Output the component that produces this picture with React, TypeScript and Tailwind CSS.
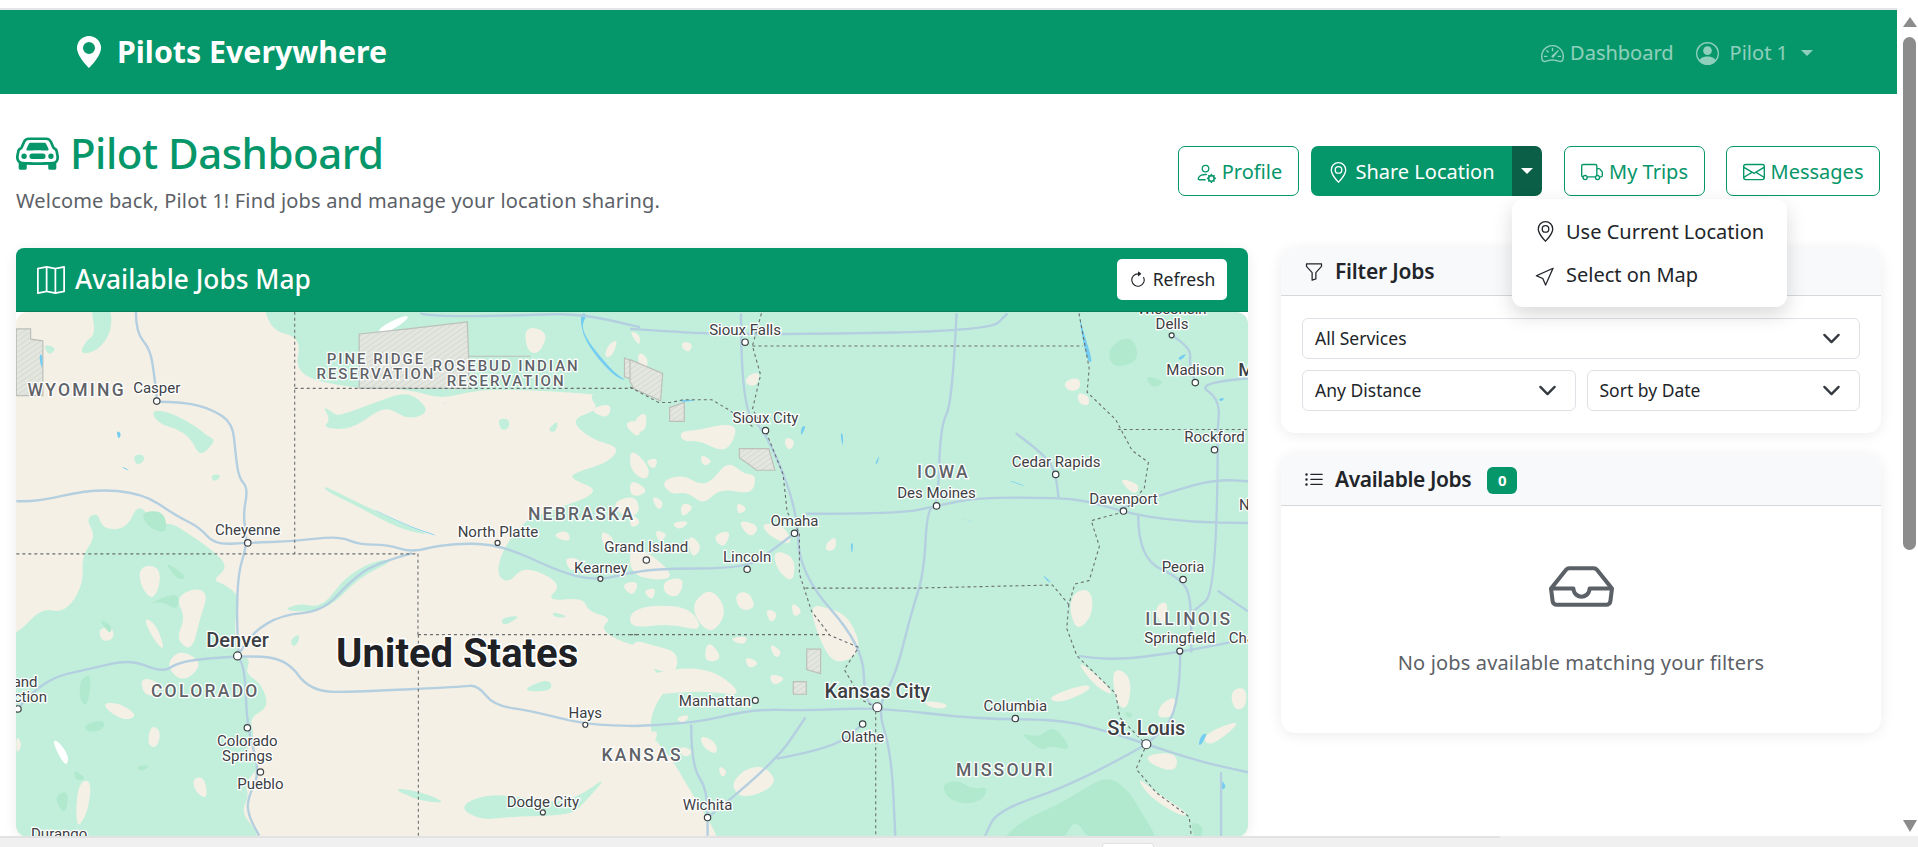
import {
  BsArrowClockwise,
  BsCarFront,
  BsCursor,
  BsEnvelope,
  BsFunnel,
  BsGeoAlt,
  BsGeoAltFill,
  BsInbox,
  BsListUl,
  BsMap,
  BsPersonCircle,
  BsPersonGear,
  BsSpeedometer2,
  BsTruck,
} from "react-icons/bs";

const sx = 1 / 2.45;
const sy = 1 / 2.92;
const lx = (x: number) => x * sx;
const rx = (x: number) => 630 + x * sx;
const my = (y: number) => 310 + y * sy;

type Label = [string, number, number, number?, number?];

// [text, x, baseline, size, weight]
const leftCities: Label[] = [
  ["Casper", 384, 243],
  ["Cheyenne", 607, 658],
  ["North Platte", 1220, 663],
  ["Kearney", 1472, 768],
  ["Denver", 582, 983, 20, 500],
  ["Colorado", 606, 1274],
  ["Springs", 606, 1318],
  ["Pueblo", 638, 1400],
  ["Hays", 1434, 1192],
  ["Dodge City", 1330, 1450],
  ["Durango", 145, 1545],
];

const rightCities: Label[] = [
  ["Sioux Falls", 282, 72],
  ["Wisconsin", 1328, 12],
  ["Dells", 1328, 55],
  ["Madison", 1385, 190],
  ["Sioux City", 332, 330],
  ["Rockford", 1432, 385],
  ["Cedar Rapids", 1044, 457],
  ["Des Moines", 751, 550],
  ["Davenport", 1209, 566],
  ["Omaha", 403, 630],
  ["Lincoln", 287, 735],
  ["Grand Island", 40, 708],
  ["Peoria", 1355, 765],
  ["Springfield", 1347, 973],
  ["Kansas City", 606, 1132, 20, 500],
  ["Manhattan", 208, 1155],
  ["Columbia", 944, 1171],
  ["Olathe", 570, 1262],
  ["St. Louis", 1265, 1240, 20, 500],
  ["Wichita", 190, 1460],
];

const leftStates: Label[] = [
  ["WYOMING", 188, 250],
  ["NEBRASKA", 1425, 612],
  ["COLORADO", 503, 1130],
  ["PINE RIDGE", 921, 158, 15],
  ["RESERVATION", 921, 202, 15],
  ["ROSEBUD INDIAN", 1240, 178, 15],
  ["RESERVATION", 1240, 222, 15],
];

const rightStates: Label[] = [
  ["KANSAS", 30, 1318],
  ["IOWA", 768, 492],
  ["ILLINOIS", 1369, 920],
  ["MISSOURI", 920, 1362],
];

const leftDots: [number, number, number?][] = [
  [384, 266], [607, 680], [1219, 680, 2.5], [1471, 785, 2.5], [582, 1010, 4], [606, 1220],
  [638, 1349], [1434, 1211, 2.5], [1330, 1467, 2.5], [44, 1165],
];

const rightDots: [number, number, number?][] = [
  [282, 94], [1327, 74, 2.5], [1385, 212], [332, 352], [1432, 408], [1043, 480], [751, 572],
  [1209, 587], [403, 652], [40, 730], [287, 757], [1355, 787], [1347, 996, 3], [606, 1160, 4.5],
  [307, 1140, 3], [570, 1209], [944, 1193], [1265, 1268, 4.5], [190, 1482],
];

// the big green body of the map, its west edge wanders down through Nebraska and Kansas
const landBody =
  "M1500 210 L1440 250 L1470 290 L1395 320 L1450 380 L1520 400 L1490 445 L1420 470 L1390 490 L1480 530 L1340 590 L1290 610 L1235 690 L1215 770 L1245 800 L1285 745 L1380 800 L1335 850 L1430 840 L1440 880 L1500 900 L1470 930 L1520 969 L1620 1000 L1590 1040 L1640 1095 L1600 1160 L1590 1238 L1640 1300 L1680 1381 L1720 1460 L1770 1560 L1800 1900 L3800 1900 L3800 -400 L1500 -400Z";

const leftGreen = [
  landBody,
  "M640 -60 L1568 -60 L1568 260 L1400 240 L1180 229 L1080 262 L1000 229 L860 229 L720 190 L740 80 L660 60Z",
  "M790 280 L815 300 L830 310 L920 270 L990 240 L1030 262 L1050 300 L1000 320 L960 290 L930 290 L860 350 L790 345 L810 320Z",
  "M220 -20 L270 -20 L275 60 L240 120 L195 130 L210 90 L235 70Z",
  "M370 290 L420 300 L480 340 L510 370 L530 380 L490 430 L470 380 L440 350 L385 330Z",
  "M105 100 L140 110 L120 135Z",
  "M1220 315 L1250 320 L1245 350 L1225 350Z",
  "M1340 350 L1370 320 L1360 360Z",
  "M325 425 L350 420 L355 440 L335 455Z",
  "M515 480 L545 480 L525 505Z",
  "M790 510 L890 570 L1000 630 L1060 660 L980 640 L870 570 L800 530Z",
  "M-60 990 L40 950 L100 870 L160 885 L205 800 L200 720 L235 660 L210 610 L240 590 L250 640 L310 640 L340 560 L380 630 L420 620 L470 660 L520 700 L560 750 L520 790 L550 800 L590 840 L575 900 L578 1000 L615 1020 L600 1060 L640 1090 L660 1160 L610 1190 L625 1250 L600 1280 L640 1330 L600 1380 L610 1420 L590 1470 L640 1535 L660 1800 L-60 1800Z",
  "M845 780 L920 730 L970 730 L880 780 L800 880 L690 880 L730 855 L790 870Z",
  "M712 960 L735 945 L730 975 L715 985Z",
  "M970 1395 L1040 1410 L1095 1440 L1040 1435 L980 1410Z",
  "M1125 1455 L1170 1420 L1240 1415 L1350 1440 L1420 1420 L1490 1360 L1430 1440 L1400 1475 L1240 1480 L1180 1490Z",
  "M1285 1105 L1345 1075 L1355 1110 L1300 1115Z",
  "M1225 900 L1280 890 L1235 925Z",
  "M1350 880 L1395 895 L1360 900Z",
  "M1470 925 L1568 930 L1500 940Z",
  "M1540 1100 L1568 1090 L1568 1130Z",
];

const leftHoles = [
  "M340 750 L385 745 L395 790 L375 850 L345 810Z",
  "M430 840 L480 810 L510 830 L490 900 L470 1000 L430 960 L455 900Z",
  "M240 930 L275 925 L280 960 L250 970Z",
  "M350 895 L385 920 L405 1000 L375 960Z",
  "M440 990 L500 1030 L450 1090 L405 1040Z",
  "M245 1150 L290 1145 L340 1185 L300 1200Z",
  "M345 1070 L395 1090 L380 1130 L350 1120Z",
  "M470 1370 L500 1360 L510 1430 L480 1410Z",
  "M370 1210 L395 1230 L385 1280 L360 1270Z",
  "M190 1380 L225 1370 L215 1470 L185 1520Z",
  "M40 1240 L55 1270 L40 1300Z",
  "M1000 110 L1120 75 L1130 115 L1060 180 L970 165Z",
  "M1285 45 L1345 65 L1320 130 L1290 120Z",
  "M1490 100 L1515 85 L1500 135 L1480 140Z",
  "M1540 60 L1568 70 L1568 110Z",
  "M1470 640 L1510 670 L1480 700Z",
  "M1380 720 L1430 730 L1400 770Z",
  "M1300 820 L1340 800 L1330 840Z",
  "M1520 800 L1568 790 L1550 840Z",
  "M1500 560 L1560 540 L1568 600 L1520 600Z",
  "M1350 660 L1390 640 L1400 680Z",
  "M1440 290 L1500 270 L1490 320Z",
  "M1525 330 L1568 320 L1568 380Z",
];

const leftDark = [
  "M345 590 L400 585 L410 640 L395 650 L360 630Z",
  "M400 730 L460 780 L435 790Z",
  "M360 860 L440 820 L435 880 L400 850Z",
  "M240 900 L275 920 L270 950Z",
  "M205 1210 L255 1195 L255 1225 L215 1235Z",
  "M180 1340 L215 1370 L185 1375Z",
  "M335 1330 L370 1330 L345 1350Z",
  "M195 1080 L225 1060 L215 1160 L195 1140Z",
  "M130 1420 L170 1400 L160 1480Z",
];

const snow = [
  "M930 50 L990 15 L1005 22 L960 60 L925 75Z",
  "M128 1258 L142 1258 L168 1300 L165 1330 L150 1315Z",
];

const rightBeige = [
  "M20 120 L45 140 L40 180 L20 160Z",
  "M130 90 L155 100 L145 125 L125 110Z",
  "M290 190 L320 180 L310 225 L280 215Z",
  "M10 320 L40 295 L40 350 L15 360Z",
  "M120 355 L170 350 L240 330 L265 350 L235 420 L170 380 L130 385Z",
  "M380 370 L405 380 L395 410 L380 400Z",
  "M0 400 L50 460 L40 500 L0 470Z",
  "M75 500 L130 480 L170 510 L200 500 L240 440 L280 480 L310 480 L300 540 L220 520 L180 570 L140 530 L100 540Z",
  "M0 490 L50 530 L0 550Z",
  "M50 540 L85 560 L70 590Z",
  "M125 560 L160 575 L125 610Z",
  "M100 620 L150 615 L120 645Z",
  "M260 610 L320 630 L295 670Z",
  "M200 660 L250 640 L230 700Z",
  "M140 650 L180 690 L150 730Z",
  "M320 620 L380 630 L400 690 L340 660Z",
  "M350 700 L405 720 L400 800 L360 760Z",
  "M480 680 L505 660 L505 700 L480 705Z",
  "M0 590 L30 620 L0 640Z",
  "M0 680 L60 720 L110 780 L60 790 L0 770Z",
  "M80 790 L135 780 L120 840 L85 830Z",
  "M255 830 L290 820 L310 870 L270 880Z",
  "M155 850 L200 810 L240 880 L200 950 L160 900Z",
  "M0 880 L60 860 L150 870 L180 940 L100 915 L0 930Z",
  "M240 960 L290 950 L280 980Z",
  "M340 970 L375 1000 L355 1020Z",
  "M440 860 L490 870 L540 900 L570 1000 L500 1040 L460 950Z",
  "M0 960 L60 980 L120 1000 L110 1070 L50 1040 L0 1070Z",
  "M190 960 L230 1020 L180 1030Z",
  "M130 1040 L220 1060 L280 1130 L180 1110 L0 1130 L0 1080Z",
  "M720 1140 L780 1150 L770 1165 L730 1160Z",
  "M170 1240 L210 1260 L215 1300 L180 1280Z",
  "M245 1390 L280 1340 L330 1330 L365 1385 L280 1430Z",
  "M0 1330 L60 1350 L110 1400 L110 1490 L170 1560 L0 1560Z",
  "M1060 210 L1100 195 L1105 230 L1075 240Z",
  "M1095 240 L1125 250 L1125 280 L1100 275Z",
  "M1200 490 L1250 510 L1240 540 L1215 520Z",
  "M1090 820 L1130 815 L1135 890 L1095 940 L1075 870Z",
  "M1290 860 L1320 850 L1310 920 L1290 900Z",
  "M1020 1130 L1120 1090 L1130 1110 L1050 1150Z",
  "M1090 1020 L1150 1070 L1190 1130 L1140 1100Z",
  "M1180 1040 L1230 1070 L1220 1170 L1190 1150Z",
  "M1300 1150 L1340 1125 L1330 1190 L1290 1190Z",
  "M1470 1110 L1510 1100 L1510 1160 L1480 1170Z",
  "M1260 1300 L1340 1290 L1340 1350 L1280 1330Z",
  "M1400 1240 L1510 1190 L1420 1280Z",
  "M1240 1360 L1290 1410 L1370 1470 L1350 1480 L1270 1420Z",
  "M35 440 L70 430 L60 470Z",
  "M170 420 L205 440 L180 460Z",
  "M260 560 L290 580 L265 600Z",
  "M60 640 L95 655 L70 680Z",
  "M30 820 L65 810 L55 850Z",
  "M330 870 L365 885 L345 920Z",
  "M395 850 L425 880 L400 900Z",
  "M280 1010 L320 1030 L290 1050Z",
  "M340 1060 L385 1075 L350 1100Z",
  "M110 1190 L150 1180 L130 1210Z",
  "M30 1240 L70 1225 L60 1265Z",
  "M215 1330 L240 1345 L225 1370Z",
  "M120 1270 L160 1290 L130 1310Z",
  "M20 1180 L50 1170 L35 1200Z",
];

const rightDark = [
  "M1260 190 L1315 210 L1280 230Z",
  "M1170 110 L1230 70 L1250 150 L1180 170Z",
  "M760 1390 L800 1370 L840 1400 L880 1390 L860 1440 L790 1440Z",
  "M950 1230 L1000 1250 L1040 1210 L1085 1290 L1030 1270 L1010 1290Z",
  "M1040 1450 L1110 1400 L1170 1360 L1220 1400 L1260 1480 L1300 1560 L1130 1560 L1090 1480 L1060 1560 L900 1560 L960 1490Z",
  "M1370 1490 L1410 1510 L1390 1560Z",
  "M1210 1170 L1235 1180 L1220 1195Z",
];

const leftRoads = [
  "M333 5 L333 65 L368 115 L378 190 L385 265",
  "M385 268 L450 268 L520 290 L570 330 L577 420 L585 490 L608 520 L595 600 L607 680 L580 780 L582 1010 L600 1050 L605 1220 L638 1350 L605 1430 L610 1480 L635 1535",
  "M40 558 L85 562 L225 522 L350 535 L430 600 L490 635 L525 685 L607 680 L720 675 L830 660 L880 685 L950 685 L1010 708 L1080 685 L1220 680 L1380 770 L1470 790 L1568 760",
  "M1010 710 L920 740 L860 790 L790 880 L690 890 L620 940 L582 1010",
  "M40 1170 L100 1080 L230 1045 L320 1020 L400 1060 L440 1025 L582 1010 L700 1015 L760 1115 L880 1115 L1130 1100 L1170 1095 L1210 1155 L1300 1170 L1434 1211 L1568 1215",
  "M1030 10 L1060 20 L1300 15 L1420 10 L1568 50",
];

const rightRoads = [
  "M0 55 L120 65 L282 72 L880 62 L925 10",
  "M272 10 L272 290 L332 352 L410 580 L415 770 L570 980 L575 1140 L605 1160",
  "M800 10 L790 270 L760 340 L755 572 L728 580 L720 770 L690 880 L650 1070 L605 1160 L640 1290 L650 1535",
  "M430 595 L660 595 L751 572 L850 548 L1050 548 L1130 560 L1240 600 L1380 620 L1514 622",
  "M0 1215 L150 1210 L300 1165 L440 1170 L605 1160 L850 1195 L1050 1195 L1170 1230 L1265 1268 L1400 1320 L1514 1350",
  "M1245 600 L1245 725 L1355 787 L1375 850 L1375 1000",
  "M1348 1000 L1348 1180 L1265 1268",
  "M1440 350 L1440 820 L1380 880",
  "M1514 200 L1385 212 L1445 260 L1440 350",
  "M1327 74 L1375 110 L1370 160 L1385 212",
  "M1265 1268 L1100 1380 L900 1460 L870 1535",
  "M190 1482 L350 1330 L430 1190",
  "M150 1210 L150 1330 L190 1400 L190 1535",
  "M360 1310 L500 1280 L570 1209",
  "M0 770 L40 755 L287 755 L350 700 L403 652",
  "M945 360 L1020 425 L1043 480 L1050 548",
  "M1100 1010 L1170 1025 L1347 1000 L1514 960",
  "M1200 580 L1350 520 L1440 495 L1514 500",
  "M1440 820 L1514 880",
  "M1448 1350 L1448 1535",
];

const leftBorders = [
  "M722 5 L722 712",
  "M40 712 L1020 712",
  "M1024 712 L1024 948",
  "M1024 948 L1568 948",
  "M1025 948 L1025 1535",
  "M722 229 L1568 229",
];

const rightBorders = [
  "M300 105 L1110 105",
  "M322 10 L300 105 L320 190 L300 290 L332 352 L375 480 L385 590 L415 650 L415 770 L445 880 L490 950 L560 985 L525 1050 L570 1140 L602 1160 L602 1535",
  "M0 948 L490 948",
  "M430 812 L700 812 L1035 803 L1075 860 L1090 800 L1125 790 L1150 690 L1130 615 L1209 590",
  "M1195 349 L1514 349",
  "M1100 10 L1125 170 L1120 240 L1190 320 L1230 410 L1270 445 L1260 520 L1209 590",
  "M1075 860 L1070 930 L1095 1010 L1190 1120 L1200 1190 L1265 1270 L1240 1340 L1290 1410 L1370 1480 L1375 1535",
  "M0 225 L70 270 L100 270 L130 262 L200 262 L240 290 L300 340",
];

const water = [
  "M95 130 L105 130 L103 180Z",
  "M285 352 L298 360 L290 380Z",
  "M298 455 L320 470 L305 465Z",
  "M895 570 L1000 630 L1080 662 L1040 650 L960 610Z",
  "M1080 275 L1125 262 L1090 272Z",
  "M1420 10 L1440 10 L1420 60 L1500 180 L1540 210 L1500 190 L1430 90Z",
];

const waterRight = [
  "M1100 10 L1110 60 L1135 155 L1120 150 L1105 60Z",
  "M115 262 L170 262 L130 270Z",
  "M790 595 L848 625 L810 605Z",
  "M1010 770 L1035 800 L1020 790Z",
  "M1400 1240 L1415 1235 L1400 1270 L1392 1270Z",
  "M1445 1370 L1462 1390 L1450 1405Z",
  "M1440 260 L1458 255 L1450 268Z",
  "M1340 140 L1366 125 L1350 148Z",
  "M420 340 L432 338 L418 372Z",
  "M515 360 L522 360 L522 405Z",
  "M600 450 L612 420 L606 450Z",
  "M540 680 L547 680 L544 718Z",
  "M925 495 L980 518 L940 505Z",
];

const reservations = [
  "M880 70 L1000 55 L1145 35 L1148 135 L1300 135 L1148 135 L1148 229 L880 229Z",
  "M40 55 L75 55 L75 85 L105 90 L105 250 L40 250Z",
  "M1530 140 L1568 160 L1568 210 L1530 195Z",
];

const reservationsRight = [
  "M0 145 L80 185 L75 265 L10 230 L0 210Z",
  "M97 285 L133 270 L133 325 L97 325Z",
  "M268 405 L340 405 L355 468 L310 468 L290 450 L268 432Z",
  "M433 990 L467 990 L467 1062 L433 1050Z",
  "M400 1085 L432 1085 L432 1122 L400 1122Z",
];

// rounds the corners of the rough outlines, the picture's land cover has no hard edges
function smooth(d: string) {
  const n = d.match(/-?\d+(\.\d+)?/g)!.map(Number);
  const pts: [number, number][] = [];
  for (let i = 0; i < n.length; i += 2) pts.push([n[i], n[i + 1]]);
  const mid = (a: [number, number], b: [number, number]) => `${(a[0] + b[0]) / 2} ${(a[1] + b[1]) / 2}`;
  if (d.endsWith("Z")) {
    let out = `M${mid(pts[pts.length - 1], pts[0])}`;
    pts.forEach((p, i) => {
      out += ` Q${p[0]} ${p[1]} ${mid(p, pts[(i + 1) % pts.length])}`;
    });
    return out + "Z";
  }
  let out = `M${pts[0][0]} ${pts[0][1]}`;
  for (let i = 1; i < pts.length - 1; i++) out += ` Q${pts[i][0]} ${pts[i][1]} ${mid(pts[i], pts[i + 1])}`;
  const last = pts[pts.length - 1];
  return `${out} L${last[0]} ${last[1]}`;
}

function MapText({ items, toX, className }: { items: Label[]; toX: (x: number) => number; className: string }) {
  return (
    <>
      {items.map(([text, x, y, size, weight]) => (
        <text
          key={text + x}
          x={toX(x)}
          y={my(y)}
          textAnchor="middle"
          fontWeight={weight}
          stroke="#ffffff"
          strokeWidth={2.5}
          paintOrder="stroke"
          className={className}
          style={size ? { fontSize: size } : undefined}
        >
          {text}
        </text>
      ))}
    </>
  );
}

function Shapes({ d, className, round = true }: { d: string[]; className: string; round?: boolean }) {
  return (
    <>
      {d.map((p) => (
        <path key={p} d={round ? smooth(p) : p} vectorEffect="non-scaling-stroke" className={className} />
      ))}
    </>
  );
}

function Dots({ items, toX }: { items: [number, number, number?][]; toX: (x: number) => number }) {
  return (
    <>
      {items.map(([x, y, r]) => (
        <circle key={`${x}-${y}`} cx={toX(x)} cy={my(y)} r={r ?? 3.2} fill="#ffffff" stroke="#3c4043" strokeWidth={1.2} />
      ))}
    </>
  );
}

function JobsMap() {
  const leftT = `translate(0 310) scale(${sx} ${sy})`;
  const rightT = `translate(630 310) scale(${sx} ${sy})`;
  const beige = "fill-[#f5f0e5]";
  const green = "fill-[#c2efdb]";
  const dark = "fill-[#b0e9cd]";
  const road = "fill-none stroke-[#b4cfe0] stroke-[2.4px] [stroke-linejoin:round]";
  const border = "fill-none stroke-[#6b6f72] stroke-[1.1px] [stroke-dasharray:3_3]";
  const cityText = "fill-[#3c4043] text-[15px]";
  const stateText = "fill-[#5f6368] text-[17.5px] font-medium tracking-[0.13em]";
  const res = "fill-[url(#hatch)] stroke-[#bcbfba] stroke-[1.2px]";
  const lake = "fill-[#74cdf0]";

  return (
    <div className="h-[525px] overflow-hidden rounded-[12px]">
      <svg viewBox="16 312 1233 525" className="block h-[525px] w-[1233px] font-['Roboto',sans-serif]">
        <defs>
          <pattern id="hatch" width="14" height="12" patternUnits="userSpaceOnUse" patternTransform="rotate(-40)">
            <rect width="14" height="12" fill="#e2e6de" />
            <rect width="14" height="2" fill="#d2d6ce" />
          </pattern>
        </defs>
        <rect x="16" y="312" width="1233" height="525" fill="#f5f0e5" />
        <g transform={leftT}>
          <Shapes d={leftGreen} className={green} />
          <Shapes d={leftHoles} className={beige} />
          <Shapes d={leftDark} className={dark} />
          <Shapes d={snow} className="fill-white" />
          <Shapes d={reservations} className={res} round={false} />
          <Shapes d={water} className={lake} />
          <Shapes d={leftRoads} className={road} />
          <Shapes d={leftBorders} className={border} round={false} />
        </g>
        <g transform={rightT}>
          <Shapes d={rightBeige} className={beige} />
          <Shapes d={rightDark} className={dark} />
          <Shapes d={reservationsRight} className={res} round={false} />
          <Shapes d={waterRight} className={lake} />
          <Shapes d={rightRoads} className={road} />
          <Shapes d={rightBorders} className={border} round={false} />
        </g>
        <Dots items={leftDots} toX={lx} />
        <Dots items={rightDots} toX={rx} />
        <MapText items={leftCities} toX={lx} className={cityText} />
        <MapText items={rightCities} toX={rx} className={cityText} />
        <MapText items={leftStates} toX={lx} className={stateText} />
        <MapText items={rightStates} toX={rx} className={stateText} />
        <text x={lx(92)} y={my(1100)} textAnchor="end" stroke="#fff" strokeWidth={2.5} paintOrder="stroke" className={cityText}>Grand</text>
        <text x={lx(115)} y={my(1145)} textAnchor="end" stroke="#fff" strokeWidth={2.5} paintOrder="stroke" className={cityText}>Junction</text>
        <text x={rx(1490)} y={my(192)} stroke="#fff" strokeWidth={2.5} paintOrder="stroke" className="fill-[#3c4043] text-[18px] font-medium">Milwaukee</text>
        <text x={rx(1492)} y={my(585)} stroke="#fff" strokeWidth={2.5} paintOrder="stroke" className={cityText}>Naperville</text>
        <text x={rx(1467)} y={my(973)} stroke="#fff" strokeWidth={2.5} paintOrder="stroke" className={cityText}>Champaign</text>
        <text x={lx(1120)} y={my(1042)} textAnchor="middle" stroke="#fff" strokeWidth={3} paintOrder="stroke" className="fill-[#202124] text-[40px] font-bold">United States</text>
      </svg>
    </div>
  );
}

function OutlineButton({ icon, label, width }: { icon: React.ReactNode; label: string; width: string }) {
  return (
    <button className={`flex h-[50px] items-center justify-center gap-[6px] rounded-[7px] border border-[#059669] bg-white pt-[2px] text-[20px] text-[#059669] ${width}`}>
      {icon}
      {label}
    </button>
  );
}

function FilterSelect({ label, className }: { label: string; className: string }) {
  return (
    <div className={`flex h-[41px] items-center justify-between rounded-[6px] border border-[#dee2e6] bg-white pl-[12px] pr-[18px] text-[17.5px] text-[#212529] ${className}`}>
      {label}
      <svg viewBox="0 0 16 16" className="h-[19px] w-[19px] fill-none stroke-[#343a40] stroke-2 [stroke-linecap:round] [stroke-linejoin:round]">
        <path d="m2 5 6 6 6-6" />
      </svg>
    </div>
  );
}

export default function App() {
  return (
    <div className="flex h-[847px] w-[1918px] flex-col overflow-hidden bg-white font-['Noto_Sans',sans-serif]">
      <div className="flex h-[836px] min-h-0">
        <div className="w-[1897px] shrink-0">
          <div className="h-[10px] border-b-2 border-[#e3e5e7] bg-white" />
          <nav className="flex h-[84px] items-center justify-between bg-[#059669] pl-[73px] pr-[84px]">
            <div className="flex items-center gap-[12px] text-[30.3px] font-bold text-white">
              <BsGeoAltFill className="text-[32px]" />
              Pilots Everywhere
            </div>
            <div className="flex items-center pt-[2px] text-[20px] text-white/55">
              <BsSpeedometer2 className="mr-[6px] text-[23px]" />
              Dashboard
              <BsPersonCircle className="ml-[22px] mr-[11px] text-[23px]" />
              Pilot 1
              <span className="ml-[13px] h-0 w-0 border-x-[6px] border-t-[6px] border-x-transparent border-t-white/55" />
            </div>
          </nav>

          <main className="px-[16px]">
            <div className="flex h-[154px] items-start justify-between">
              <div className="pt-[33px]">
                <h1 className="flex items-center gap-[11px] text-[42px] font-medium leading-[52px] tracking-[-0.5px] text-[#059669]">
                  <BsCarFront className="text-[43px]" />
                  Pilot Dashboard
                </h1>
                <p className="mt-[7px] text-[20px] leading-[30px] tracking-[0.17px] text-[#5c6167]">
                  Welcome back, Pilot 1! Find jobs and manage your location sharing.
                </p>
              </div>
              <div className="flex items-start pr-[1px] pt-[52px]">
                <OutlineButton icon={<BsPersonGear className="text-[21px]" />} label="Profile" width="w-[121px]" />
                <div className="relative ml-[12px] flex">
                  <button className="flex h-[50px] w-[201px] items-center justify-center gap-[6px] rounded-l-[7px] bg-[#059669] pt-[2px] text-[20px] text-white">
                    <BsGeoAlt className="text-[21px]" />
                    Share Location
                  </button>
                  <button className="flex h-[50px] w-[30px] items-center justify-center rounded-r-[7px] bg-[#0a5f46]">
                    <span className="h-0 w-0 border-x-[6px] border-t-[6px] border-x-transparent border-t-white" />
                  </button>
                  <div className="absolute left-[201px] top-[53px] z-10 w-[275px] rounded-[11px] bg-white py-[10px] shadow-[0_8px_20px_rgba(0,0,0,0.15)]">
                    <div className="flex h-[44px] items-center gap-[10px] pl-[23px] pt-[1px] text-[20px] text-[#212529]">
                      <BsGeoAlt className="text-[21px]" />
                      Use Current Location
                    </div>
                    <div className="flex h-[44px] items-center gap-[10px] pl-[23px] text-[20px] text-[#212529]">
                      <BsCursor className="text-[21px]" />
                      Select on Map
                    </div>
                  </div>
                </div>
                <div className="ml-[22px]">
                  <OutlineButton icon={<BsTruck className="text-[22px]" />} label="My Trips" width="w-[141px]" />
                </div>
                <div className="ml-[21px]">
                  <OutlineButton icon={<BsEnvelope className="text-[22px]" />} label="Messages" width="w-[154px]" />
                </div>
              </div>
            </div>

            <div className="flex items-start gap-[33px]">
              <section className="w-[1232px] shrink-0 rounded-[12px] shadow-[0_2px_14px_rgba(0,0,0,0.08)]">
                <div className="flex h-[64px] items-center justify-between rounded-t-[8px] border-b border-[#0a7d5a] bg-[#059669] pl-[21px] pr-[21px]">
                  <h2 className="flex items-center gap-[10px] text-[26.3px] font-medium text-white">
                    <BsMap className="text-[28px]" />
                    Available Jobs Map
                  </h2>
                  <button className="flex h-[41px] w-[110px] items-center justify-center gap-[6px] rounded-[5px] bg-white text-[17.5px] text-[#212529]">
                    <BsArrowClockwise className="text-[18px]" />
                    Refresh
                  </button>
                </div>
                <JobsMap />
              </section>

              <aside className="flex w-[600px] shrink-0 flex-col gap-[21px]">
                <section className="h-[185px] rounded-[14px] bg-white shadow-[0_2px_14px_rgba(0,0,0,0.08)]">
                  <div className="flex h-[48px] items-center gap-[11px] rounded-t-[14px] border-b border-[#d5d8db] bg-[#f8f9fa] pl-[23px] text-[21px] font-semibold tracking-[-0.2px] text-[#212529]">
                    <BsFunnel className="text-[20px]" />
                    Filter Jobs
                  </div>
                  <div className="flex flex-col gap-[11px] px-[21px] pt-[22px]">
                    <FilterSelect label="All Services" className="w-full" />
                    <div className="flex gap-[11px]">
                      <FilterSelect label="Any Distance" className="w-[274px]" />
                      <FilterSelect label="Sort by Date" className="w-[274px]" />
                    </div>
                  </div>
                </section>

                <section className="h-[279px] rounded-[14px] bg-white shadow-[0_2px_14px_rgba(0,0,0,0.08)]">
                  <div className="flex h-[52px] items-center rounded-t-[14px] border-b border-[#d5d8db] bg-[#f8f9fa] pl-[23px] text-[21px] font-semibold tracking-[-0.4px] text-[#212529]">
                    <BsListUl className="mr-[11px] text-[20px]" />
                    Available Jobs
                    <span className="ml-[16px] mt-[2px] flex h-[27px] w-[30px] items-center justify-center rounded-[6px] bg-[#059669] text-[15px] font-bold tracking-normal text-white">0</span>
                  </div>
                  <div className="flex flex-col items-center pt-[48px]">
                    <BsInbox className="text-[65px] text-[#5c6167]" />
                    <p className="mt-[29px] text-[20px] tracking-[0.15px] text-[#5c6167]">No jobs available matching your filters</p>
                  </div>
                </section>
              </aside>
            </div>
          </main>
        </div>

        <div className="flex w-[21px] shrink-0 flex-col items-center bg-white pl-[4px] pt-[17px]">
          <span className="h-0 w-0 border-x-[7px] border-b-[10px] border-x-transparent border-b-[#8c8c8c]" />
          <div className="mt-[10px] h-[513px] w-[13px] rounded-full bg-[#8c8c8c]" />
          <span className="mt-auto mb-[4px] h-0 w-0 border-x-[7px] border-t-[12px] border-x-transparent border-t-[#8c8c8c]" />
        </div>
      </div>
      <div className="h-[11px] bg-[#f0f0f0]">
        <div className="h-[2px] w-[1500px] bg-[#e2e2e2]" />
        <div className="ml-[1102px] mt-[5px] h-[4px] w-[52px] rounded-t-[4px] border border-b-0 border-[#e0e0e0] bg-white" />
      </div>
    </div>
  );
}
